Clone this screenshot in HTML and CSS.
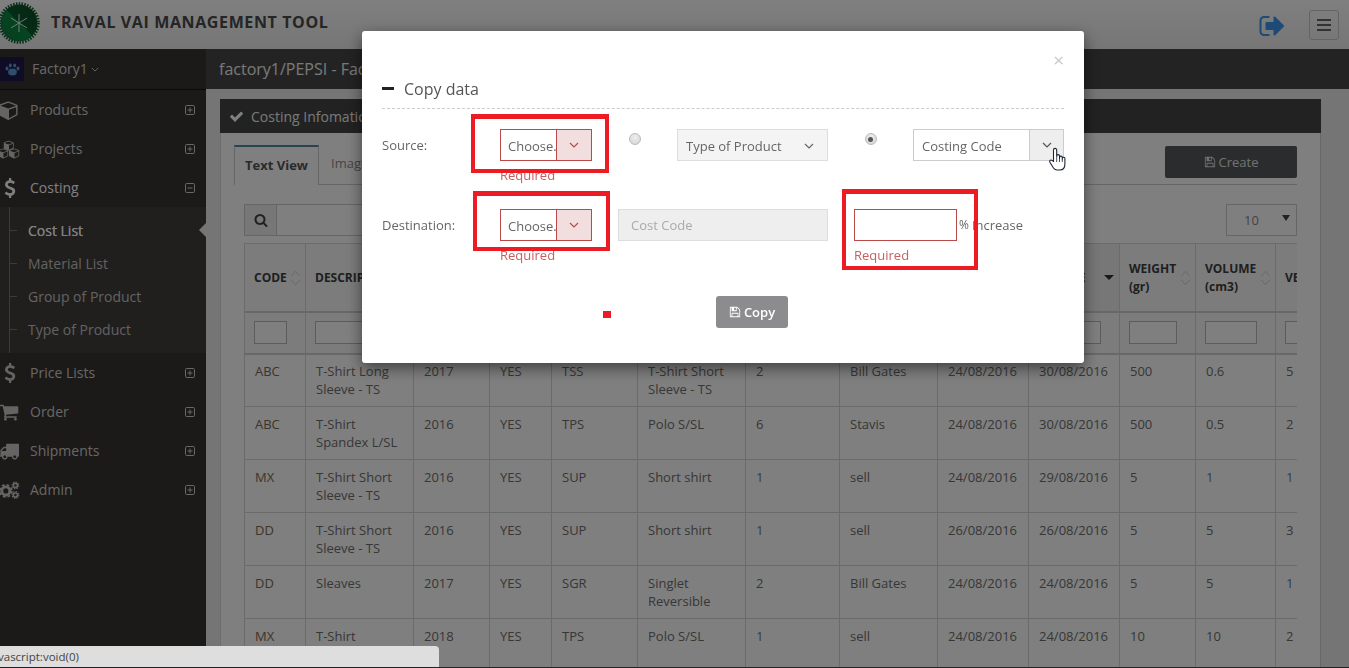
FILE: index.html
```html
<!DOCTYPE html>
<html lang="en">
<head>
<meta charset="utf-8">
<title>Traval Vai Management Tool</title>
<link rel="stylesheet" href="styles.css">
</head>
<body>
<svg class="defs" aria-hidden="true">
  <symbol id="i-check" viewBox="0 0 1792 1792"><path d="M1671 566q0 40-28 68l-724 724-136 136q-28 28-68 28t-68-28l-136-136-362-362q-28-28-28-68t28-68l136-136q28-28 68-28t68 28l294 295 656-657q28-28 68-28t68 28l136 136q28 28 28 68z"/></symbol>
  <symbol id="i-search" viewBox="0 0 1792 1792"><path d="M1216 832q0-185-131.5-316.5t-316.5-131.5-316.5 131.5-131.5 316.5 131.5 316.5 316.5 131.5 316.5-131.5 131.5-316.5zm512 832q0 52-38 90t-90 38q-54 0-90-38l-343-342q-179 124-399 124-143 0-273.5-55.5t-225-150-150-225-55.5-273.5 55.5-273.5 150-225 225-150 273.5-55.5 273.5 55.5 225 150 150 225 55.5 273.5q0 220-124 399l343 343q37 37 37 90z"/></symbol>
  <symbol id="i-save" viewBox="0 0 1792 1792"><path d="M512 1536h768v-384h-768v384zm896 0h128v-896q0-14-10-38.5t-20-34.5l-281-281q-10-10-34-20t-39-10v416q0 40-28 68t-68 28h-576q-40 0-68-28t-28-68v-416h-128v1280h128v-416q0-40 28-68t68-28h832q40 0 68 28t28 68v416zm-384-928v-320q0-13-9.5-22.5t-22.5-9.5h-192q-13 0-22.5 9.5t-9.5 22.5v320q0 13 9.5 22.5t22.5 9.5h192q13 0 22.5-9.5t9.5-22.5zm640 32v928q0 40-28 68t-68 28h-1344q-40 0-68-28t-28-68v-1344q0-40 28-68t68-28h928q40 0 88 20t76 48l280 280q28 28 48 76t20 88z"/></symbol>
  <symbol id="i-usd" viewBox="0 0 1792 1792"><path d="M1362 1185q0 153-99.5 263.5t-258.5 136.5v175q0 14-9 23t-23 9h-135q-13 0-22.5-9.5t-9.5-22.5v-175q-66-9-127.5-31t-101.5-44.5-74-48-46.5-37.5-17.5-18q-17-21-2-41l103-135q7-10 23-12 15-2 24 9l2 2q113 99 243 125 37 8 74 8 81 0 142.5-43t61.5-122q0-28-15-53t-33.5-42-58.5-37.5-66-32-80-32.5q-39-16-61.5-25t-61.5-26.5-62.5-31-56.5-35.5-53.5-42.5-43.5-49-35.5-58-21-66.5-8.5-78q0-138 98-242t255-134v-180q0-13 9.5-22.5t22.5-9.5h135q14 0 23 9t9 23v176q57 6 110.5 23t87 33.5 63.5 37.5 39 29 15 14q17 18 5 38l-81 146q-8 15-23 16-14 3-27-7-3-3-14.5-12t-39-26.5-58.5-32-74.5-26-85.5-11.5q-95 0-155 43t-60 111q0 26 8.5 48t29.5 41.5 39.5 33 56 31 60.5 27 70 27.5q53 20 81 31.5t76 35 75.5 42.5 62 50 53 63.5 31.5 76.5 13 94z"/></symbol>
  <symbol id="i-cart" viewBox="0 0 1792 1792"><path d="M704 1536q0 52-38 90t-90 38-90-38-38-90 38-90 90-38 90 38 38 90zm896 0q0 52-38 90t-90 38-90-38-38-90 38-90 90-38 90 38 38 90zm128-1088v512q0 24-16.5 42.5t-40.5 21.5l-1044 122q13 60 13 70 0 16-24 64h920q26 0 45 19t19 45-19 45-45 19h-1024q-26 0-45-19t-19-45q0-11 8-31.5t16-36 21.5-40 15.5-29.5l-177-823h-204q-26 0-45-19t-19-45 19-45 45-19h256q16 0 28.5 6.5t19.5 15.5 13 24.5 8 26 5.5 29.5 4.5 26h1201q26 0 45 19t19 45z"/></symbol>
  <symbol id="i-truck" viewBox="0 0 1792 1792"><path d="M640 1408q0-52-38-90t-90-38-90 38-38 90 38 90 90 38 90-38 38-90zm-384-512h384v-256h-158q-13 0-22 9l-195 195q-9 9-9 22v30zm1280 512q0-52-38-90t-90-38-90 38-38 90 38 90 90 38 90-38 38-90zm256-1088v1024q0 15-4 26.5t-13.5 18.5-16.5 11.5-23.5 6-22.5 2-25.5 0-22.5-.5q0 106-75 181t-181 75-181-75-75-181h-384q0 106-75 181t-181 75-181-75-75-181h-64q-3 0-22.5.5t-25.5 0-22.5-2-23.5-6-16.5-11.5-13.5-18.5-4-26.5q0-26 19-45t45-19v-320q0-8-.5-35t0-38 2.5-34.5 6.5-37 14-30.5 22.5-30l198-198q19-19 50.5-32t58.5-13h160v-192q0-26 19-45t45-19h1024q26 0 45 19t19 45z"/></symbol>
  <symbol id="i-cube" viewBox="0 0 1792 1792"><path d="M896 1629l640-349v-636l-640 233v752zm-64-865l698-254-698-254-698 254zm832-252v768q0 35-18 65t-49 47l-704 384q-28 16-61 16t-61-16l-704-384q-31-17-49-47t-18-65v-768q0-40 23-73t61-47l704-256q22-8 44-8t44 8l704 256q38 14 61 47t23 73z"/></symbol>
  <symbol id="i-cubes" viewBox="0 0 24 20"><use href="#i-cube" x="6" y="0" width="12" height="12"/><use href="#i-cube" x="0" y="8.5" width="12" height="12"/><use href="#i-cube" x="12" y="8.5" width="12" height="12"/></symbol>
  <symbol id="i-cogs" viewBox="0 0 24 20"><circle cx="8.5" cy="11" r="4.4" fill="none" stroke="currentColor" stroke-width="3.2"/><circle cx="8.5" cy="11" r="6.6" fill="none" stroke="currentColor" stroke-width="2" stroke-dasharray="3 2.2"/><circle cx="19" cy="5" r="2.2" fill="none" stroke="currentColor" stroke-width="1.8"/><circle cx="19" cy="5" r="3.6" fill="none" stroke="currentColor" stroke-width="1.4" stroke-dasharray="1.6 1.2"/><circle cx="19" cy="15.5" r="2.2" fill="none" stroke="currentColor" stroke-width="1.8"/><circle cx="19" cy="15.5" r="3.6" fill="none" stroke="currentColor" stroke-width="1.4" stroke-dasharray="1.6 1.2"/></symbol>
  <symbol id="i-plus" viewBox="0 0 10 10"><rect x=".5" y=".5" width="9" height="9" rx="1.2" fill="none" stroke="currentColor"/><path d="M2.5 5h5M5 2.5v5" stroke="currentColor" fill="none"/></symbol>
  <symbol id="i-minus" viewBox="0 0 10 10"><rect x=".5" y=".5" width="9" height="9" rx="1.2" fill="none" stroke="currentColor"/><path d="M2.5 5h5" stroke="currentColor" fill="none"/></symbol>
  <symbol id="i-chev" viewBox="0 0 10 6"><path d="M1 1l4 4 4-4" fill="none" stroke="currentColor" stroke-width="1.2"/></symbol>
  <symbol id="i-sort" viewBox="0 0 12 18"><path d="M1 7l5-5.5 5 5.5M1 11l5 5.5 5-5.5" fill="none" stroke="currentColor" stroke-width=".8"/></symbol>
</svg>

<div class="app">
  <header class="topbar">
    <svg class="logo" viewBox="0 0 42 42">
      <defs><linearGradient id="lg" x1="0" y1="1" x2="1" y2="0"><stop offset="0" stop-color="#0f7a3c"/><stop offset=".5" stop-color="#0c8a44"/><stop offset=".5" stop-color="#0a5a2c"/><stop offset="1" stop-color="#0a4a24"/></linearGradient></defs>
      <circle cx="21" cy="21" r="18.5" fill="url(#lg)"/>
      <circle cx="21" cy="21" r="19.2" fill="none" stroke="#0a5f30" stroke-width="3.2" stroke-dasharray="1.5 1.3"/>
      <path d="M21 12v18M13 16l16 10M13 26l16-10" stroke="#fff" stroke-width=".9" fill="none"/>
    </svg>
    <h1 class="brand">TRAVAL VAI MANAGEMENT TOOL</h1>
    <svg class="logout" viewBox="64 128 1600 1536"><path d="M704 1440q0 4 1 20t.5 26.5-3 23.5-10 19.5-20.5 6.5h-320q-119 0-203.5-84.5t-84.5-203.5v-704q0-119 84.5-203.5t203.5-84.5h320q13 0 22.5 9.5t9.5 22.5q0 4 1 20t.5 26.5-3 23.5-10 19.5-20.5 6.5h-320q-66 0-113 47t-47 113v704q0 66 47 113t113 47h312l11.5 1 11.5 3 8 5.5 7 9 2 13.5zm928-544q0 26-19 45l-544 544q-19 19-45 19t-45-19-19-45v-288h-448q-26 0-45-19t-19-45v-384q0-26 19-45t45-19h448v-288q0-26 19-45t45-19 45 19l544 544q19 19 19 45z"/></svg>
    <button class="burger" type="button" aria-label="Menu"><span></span><span></span><span></span></button>
  </header>

  <div class="shell">
    <nav class="sidebar">
      <div class="factory">
        <svg class="avatar" viewBox="0 0 24 24"><rect width="24" height="24" fill="#1c1a4a"/><g fill="#5f9ad8"><ellipse cx="12.5" cy="15" rx="4.4" ry="3.6"/><ellipse cx="7" cy="11.500" rx="1.500" ry="2"/><ellipse cx="10.300" cy="8.500" rx="1.500" ry="2.100"/><ellipse cx="14.700" cy="8.500" rx="1.500" ry="2.100"/><ellipse cx="18" cy="11.500" rx="1.500" ry="2"/></g></svg>
        <span class="factory-name">Factory1</span>
        <svg class="factory-chev"><use href="#i-chev"/></svg>
      </div>
      <a class="nav-item" href="#"><span class="nav-icon"><svg class="ico-cube"><use href="#i-cube"/></svg></span><span class="nav-label">Products</span><svg class="nav-toggle"><use href="#i-plus"/></svg></a>
      <a class="nav-item" href="#"><span class="nav-icon"><svg class="ico-wide"><use href="#i-cubes"/></svg></span><span class="nav-label">Projects</span><svg class="nav-toggle"><use href="#i-plus"/></svg></a>
      <a class="nav-item nav-open" href="#"><span class="nav-icon"><svg class="ico-usd"><use href="#i-usd"/></svg></span><span class="nav-label">Costing</span><svg class="nav-toggle"><use href="#i-minus"/></svg></a>
      <ul class="subnav">
        <li class="sub-active">Cost List</li>
        <li>Material List</li>
        <li>Group of Product</li>
        <li>Type of Product</li>
      </ul>
      <a class="nav-item" href="#"><span class="nav-icon"><svg class="ico-usd"><use href="#i-usd"/></svg></span><span class="nav-label">Price Lists</span><svg class="nav-toggle"><use href="#i-plus"/></svg></a>
      <a class="nav-item" href="#"><span class="nav-icon"><svg class="ico-cube"><use href="#i-cart"/></svg></span><span class="nav-label">Order</span><svg class="nav-toggle"><use href="#i-plus"/></svg></a>
      <a class="nav-item" href="#"><span class="nav-icon"><svg class="ico-cube"><use href="#i-truck"/></svg></span><span class="nav-label">Shipments</span><svg class="nav-toggle"><use href="#i-plus"/></svg></a>
      <a class="nav-item" href="#"><span class="nav-icon"><svg class="ico-wide"><use href="#i-cogs"/></svg></span><span class="nav-label">Admin</span><svg class="nav-toggle"><use href="#i-plus"/></svg></a>
    </nav>

    <main class="main">
      <div class="crumb">factory1/PEPSI - Factory 1</div>
      <div class="content">
        <section class="panel">
          <div class="panel-head"><svg class="panel-check"><use href="#i-check"/></svg>Costing Infomation</div>
          <div class="panel-body">
            <div class="tabrow">
              <div class="tab tab-active">Text View</div>
              <div class="tab">Image View</div>
              <div class="tab-fill"><button class="btn-create" type="button"><svg class="btn-ico"><use href="#i-save"/></svg>Create</button></div>
            </div>
            <div class="tools">
              <span class="search-addon"><svg class="search-ico"><use href="#i-search"/></svg></span>
              <span class="search-input"></span>
              <span class="page-size">10<i class="page-caret"></i></span>
            </div>
            <div class="table-wrap">
              <table class="grid">
                <colgroup>
                  <col class="c1"><col class="c2"><col class="c3"><col class="c4"><col class="c5"><col class="c6"><col class="c7"><col class="c8"><col class="c9"><col class="c10"><col class="c11"><col class="c12"><col class="c13">
                </colgroup>
                <thead>
                  <tr class="head-row">
                    <th><div class="th-in"><span>CODE</span><svg class="sort"><use href="#i-sort"/></svg></div></th>
                    <th><div class="th-in"><span>DESCRIPTION</span></div></th>
                    <th><div class="th-in"><span>YEAR</span></div></th>
                    <th><div class="th-in"><span>ACTIVE</span></div></th>
                    <th><div class="th-in"><span>TYPE</span></div></th>
                    <th><div class="th-in"><span>TYPE NAME</span></div></th>
                    <th><div class="th-in"><span>VERSION</span></div></th>
                    <th><div class="th-in"><span>USER</span></div></th>
                    <th><div class="th-in"><span>CREATED</span></div></th>
                    <th class="th-sorted"><div class="th-in"><span>UPDATE</span><i class="sort-down"></i></div></th>
                    <th><div class="th-in"><span>WEIGHT<br>(gr)</span><svg class="sort"><use href="#i-sort"/></svg></div></th>
                    <th><div class="th-in"><span>VOLUME<br>(cm3)</span><svg class="sort"><use href="#i-sort"/></svg></div></th>
                    <th><div class="th-in"><span>VE</span></div></th>
                  </tr>
                  <tr class="filter-row">
                    <td><span class="filter"></span></td><td><span class="filter"></span></td><td><span class="filter"></span></td><td><span class="filter"></span></td><td><span class="filter"></span></td><td><span class="filter"></span></td><td><span class="filter"></span></td><td><span class="filter"></span></td><td><span class="filter"></span></td><td><span class="filter"></span></td><td><span class="filter"></span></td><td><span class="filter"></span></td><td><span class="filter"></span></td>
                  </tr>
                </thead>
                <tbody>
                  <tr><td class="code">ABC</td><td>T-Shirt Long Sleeve - TS</td><td>2017</td><td>YES</td><td>TSS</td><td>T-Shirt Short Sleeve - TS</td><td>2</td><td>Bill Gates</td><td>24/08/2016</td><td>30/08/2016</td><td>500</td><td>0.6</td><td>5</td></tr>
                  <tr><td class="code">ABC</td><td>T-Shirt Spandex L/SL</td><td>2016</td><td>YES</td><td>TPS</td><td>Polo S/SL</td><td>6</td><td>Stavis</td><td>24/08/2016</td><td>30/08/2016</td><td>500</td><td>0.5</td><td>2</td></tr>
                  <tr><td class="code">MX</td><td>T-Shirt Short Sleeve - TS</td><td>2016</td><td>YES</td><td>SUP</td><td>Short shirt</td><td class="lnk">1</td><td>sell</td><td>24/08/2016</td><td>29/08/2016</td><td>5</td><td class="lnk">1</td><td class="lnk">1</td></tr>
                  <tr><td class="code">DD</td><td>T-Shirt Short Sleeve - TS</td><td>2016</td><td>YES</td><td>SUP</td><td>Short shirt</td><td class="lnk">1</td><td>sell</td><td>26/08/2016</td><td>26/08/2016</td><td>5</td><td>5</td><td>3</td></tr>
                  <tr><td class="code">DD</td><td>Sleaves</td><td>2017</td><td>YES</td><td>SGR</td><td>Singlet Reversible</td><td>2</td><td>Bill Gates</td><td>24/08/2016</td><td>24/08/2016</td><td>5</td><td>5</td><td class="lnk">1</td></tr>
                  <tr><td class="code">MX</td><td>T-Shirt</td><td>2018</td><td>YES</td><td>TPS</td><td>Polo S/SL</td><td class="lnk">1</td><td>sell</td><td>24/08/2016</td><td>24/08/2016</td><td>10</td><td>10</td><td>2</td></tr>
                </tbody>
              </table>
            </div>
          </div>
        </section>
      </div>
    </main>
  </div>
</div>

<div class="backdrop"></div>

<div class="modal" role="dialog">
  <div class="modal-close">×</div>
  <h2 class="modal-title"><i class="title-dash"></i>Copy data</h2>
  <div class="form-row">
    <label class="form-label">Source:</label>
    <div class="field-choose">
      <div class="combo combo-err"><span class="combo-text">Choose...</span><span class="combo-btn"><svg class="chev"><use href="#i-chev"/></svg></span></div>
      <div class="err">Required</div>
    </div>
    <div class="radio-cell"><i class="radio"></i></div>
    <div class="select-plain"><span>Type of Product</span><svg class="chev"><use href="#i-chev"/></svg></div>
    <div class="radio-cell"><i class="radio radio-on"></i></div>
    <div class="combo combo-code"><span class="combo-text">Costing Code</span><span class="combo-btn"><svg class="chev"><use href="#i-chev"/></svg></span></div>
  </div>
  <div class="form-row">
    <label class="form-label">Destination:</label>
    <div class="field-choose">
      <div class="combo combo-err"><span class="combo-text">Choose...</span><span class="combo-btn"><svg class="chev"><use href="#i-chev"/></svg></span></div>
      <div class="err">Required</div>
    </div>
    <div class="input-disabled">Cost Code</div>
    <div class="field-pct">
      <div class="input-err"></div>
      <div class="err">Required</div>
    </div>
    <span class="pct">%</span>
    <span class="increase">Increase</span>
  </div>
  <div class="modal-actions"><button class="btn-copy" type="button"><svg class="btn-ico"><use href="#i-save"/></svg>Copy</button></div>

  <div class="mark mark-a"></div>
  <div class="mark mark-b"></div>
  <div class="mark mark-c"></div>
  <div class="mark-dot"></div>
  <svg class="hand" viewBox="0 0 18 24"><path d="M4.5 13.5V3a1.6 1.6 0 0 1 3.2 0v6.5V9a1.4 1.4 0 0 1 2.8 0v2.5V10.500a1.400 1.400 0 0 1 2.800 0v1.500V11.500a1.300 1.300 0 0 1 2.600 0V17q0 6-5 6H8q-2 0-3.500-2L1 15.500q-1-2 1-2.500 1 0 2.500 1.500z" fill="#fff" stroke="#1d2333" stroke-width="1.100" stroke-linejoin="round"/><path d="M7.700 10v5M10.500 11v4M13.300 12v3" stroke="#1d2333" stroke-width=".8" fill="none"/></svg>
</div>

<div class="statusbar">vascript:void(0)</div>
<div class="bottom-line"></div>
</body>
</html>
```
FILE: styles.css
```css
* { box-sizing: border-box; }
html, body { margin: 0; height: 100%; overflow: hidden; }
body { font-family: "Open Sans", "Liberation Sans", sans-serif; font-size: 13px; color: #6a6a6a; background: #ebebeb; }
.defs { position: absolute; width: 0; height: 0; }
a { text-decoration: none; color: inherit; }

.app { height: 668px; display: flex; flex-direction: column; overflow: hidden; }

.topbar { flex: 0 0 49px; display: flex; align-items: center; background: linear-gradient(#ffffff, #ececec); }
.logo { width: 42px; height: 42px; margin: -4px 11px 0 -2px; flex: none; }
.brand { margin: -6px 0 0; font-size: 16px; font-weight: 700; color: #4a4a4a; letter-spacing: .62px; flex: 1; }
.logout { width: 26px; height: 24px; fill: #3c94f0; margin: 3px 24px 0 0; flex: none; }
.burger { width: 30px; height: 30px; margin: 0 10px 0 0; padding: 0; flex: none; border: 1px solid #c8c8c8; border-radius: 3px; background: transparent; display: flex; flex-direction: column; align-items: center; justify-content: center; gap: 3px; }
.burger span { display: block; width: 14px; height: 2px; background: #666; }

.shell { flex: 1; display: flex; min-height: 0; }

.sidebar { flex: 0 0 206px; background: #363432; color: #d0d0d0; }
.factory { height: 41px; display: flex; align-items: center; font-size: 14px; border-bottom: 1px solid #141414; }
.factory-name { margin-top: -2px; }
.avatar { width: 24px; height: 24px; margin-right: 8px; }
.factory-chev { width: 8px; height: 5px; margin-left: 3px; }
.nav-item { height: 39px; display: flex; align-items: center; font-size: 14px; color: #cfcfcf; padding-right: 11px; }
.nav-open { color: #fff; }
.nav-icon { flex: 0 0 30px; display: flex; align-items: center; color: #c8c8c8; }
.nav-open .nav-icon { color: #fff; }
.nav-label { flex: 1; }
.nav-toggle { width: 10px; height: 10px; color: #d0d0d0; }
.ico-cube { width: 20px; height: 20px; margin-left: -1px; fill: currentColor; }
.ico-wide { width: 22px; height: 20px; margin-left: -2px; fill: currentColor; }
.ico-usd { width: 20px; height: 20px; fill: currentColor; }

.subnav { list-style: none; margin: 0; padding: 7px 0; background: #403e3c; position: relative; }
.subnav::before { content: ""; position: absolute; left: 9px; top: 0; bottom: 0; width: 1px; background: #777; }
.subnav li { height: 33px; line-height: 33px; padding-left: 28px; font-size: 14px; color: #c4c4c4; position: relative; }
.subnav li::before { content: ""; position: absolute; left: 9px; top: 16px; width: 8px; height: 1px; background: #777; }
.subnav .sub-active { color: #fff; text-shadow: 0 0 .6px #fff; }
.sub-active::after { content: ""; position: absolute; right: 0; top: 9px; border: 7px solid transparent; border-right-color: #ebebeb; border-left-width: 0; }

.main { flex: 1; min-width: 0; display: flex; flex-direction: column; }
.crumb { flex: 0 0 40px; background: #464646; color: #f2f2f2; font-size: 16px; line-height: 40px; padding-left: 13px; }
.content { flex: 1; padding: 10px 28px 0 14px; min-height: 0; }
.panel { background: #fff; border-right: 1px solid #d0d0d0; height: 100%; display: flex; flex-direction: column; }
.panel-head { flex: 0 0 34px; background: #444; color: #f0f0f0; font-size: 14px; display: flex; align-items: center; padding-left: 9px; margin-right: -1px; }
.panel-check { width: 15px; height: 15px; fill: #fff; margin-right: 7px; }
.panel-body { flex: 1; padding: 12px 23px 0 14px; min-height: 0; border-left: 1px solid #dcdcdc; }

.tabrow { display: flex; height: 40px; }
.tab { padding: 9px 12px 0; font-size: 13px; color: #8a8a8a; height: 40px; border-bottom: 1px solid #ccc; white-space: nowrap; }
.tab-active { width: 85px; padding-left: 10px; border: 1px solid #ccc; border-top: 2px solid #4f86a8; border-bottom: 0; color: #555; font-weight: 700; margin-left: -1px; }
.tab-fill { flex: 1; display: flex; justify-content: flex-end; align-items: flex-start; border-bottom: 1px solid #ccc; }
.btn-create { width: 132px; height: 32px; margin-top: 1px; border: 0; border-radius: 2px; background: #57585b; color: #e4e4e4; font: 13px "Open Sans", sans-serif; display: flex; align-items: center; justify-content: center; }
.btn-ico { width: 12px; height: 12px; fill: currentColor; margin-right: 3px; }

.tools { display: flex; margin: 19px 0 7px 9px; height: 32px; }
.search-addon { width: 33px; border: 1px solid #ccc; background: #eee; display: flex; align-items: center; justify-content: center; }
.search-ico { width: 14px; height: 14px; fill: #444; }
.search-input { flex: 1; border: 1px solid #ccc; border-left: 0; margin-right: 230px; }
.page-size { width: 71px; border: 1px solid #ccc; text-align: center; line-height: 31px; color: #888; padding-right: 20px; position: relative; }
.page-caret { position: absolute; right: 6px; top: 10px; border: 4px solid transparent; border-top: 6px solid #444; border-bottom: 0; }

.table-wrap { margin-left: 9px; overflow: hidden; }
.grid { border-collapse: collapse; table-layout: fixed; width: 1091px; border-top: 1px solid #ccc; }
.c1 { width: 61px; } .c2 { width: 108px; } .c3 { width: 76px; } .c4 { width: 62px; } .c5 { width: 86px; }
.c6 { width: 108px; } .c7 { width: 94px; } .c8 { width: 98px; } .c9 { width: 91px; } .c10 { width: 91px; }
.c11 { width: 76px; } .c12 { width: 80px; } .c13 { width: 70px; }
.grid th, .grid td { border: 1px solid #d6d6d6; padding: 0; }
.head-row { height: 68px; background: #f8f8f8; }
.head-row th { border-bottom: 2px solid #d0d0d0; text-align: left; font-size: 12px; font-weight: 700; color: #3e3e3e; line-height: 18px; }
.th-in { display: flex; align-items: center; padding: 1px 4px 0 9px; justify-content: space-between; height: 100%; white-space: nowrap; overflow: hidden; }
.th-sorted { background: #efefef; }
.sort { width: 11px; height: 16px; color: #c4c4c4; flex: none; margin-top: 1px; }
.sort-down { flex: none; margin-right: 1px; border: 5px solid transparent; border-top: 5px solid #333; border-bottom: 0; }
.filter-row { height: 42px; background: #f8f8f8; }
.filter-row td { border-bottom: 2px solid #d0d0d0; padding: 0 18px 0 9px; }
.filter { display: block; height: 23px; background: #fff; border: 1px solid #b8b8b8; }
.grid tbody tr { height: 53px; }
.grid tbody td { vertical-align: top; padding: 8px 10px 0 10px; line-height: 18px; font-size: 13px; color: #6e6e6e; background: #fff; }
.grid tbody tr:first-child td { padding-top: 7px; }
.grid tbody td.code { color: #7c6a55; }
.grid tbody td.lnk { color: #5a7f9a; }

.backdrop { position: fixed; inset: 0; background: rgba(0, 0, 0, .5); }

.modal { position: fixed; left: 362px; top: 31px; width: 722px; height: 332px; background: #fff; border-radius: 3px; box-shadow: 0 5px 15px rgba(0, 0, 0, .5); padding: 0 20px; }
.modal-close { position: absolute; right: 20px; top: 18px; font-size: 19px; line-height: 22px; color: #c8c8c8; }
.modal-title { margin: 0; padding-top: 46px; height: 78px; font-size: 16px; font-weight: 400; color: #555; line-height: 24px; border-bottom: 1px dashed #ccc; display: flex; align-items: flex-start; }
.title-dash { width: 12px; height: 3px; background: #222; margin: 10px 10px 0 0; }

.form-row { display: flex; align-items: flex-start; height: 80px; font-size: 13px; color: #666; }
.modal-title + .form-row { margin-top: 20px; }
.form-label { flex: 0 0 118px; line-height: 32px; }
.field-choose { flex: 0 0 92px; min-width: 0; }
.combo { display: flex; height: 32px; border: 1px solid #ccc; background: #fff; }
.combo-text { flex: 1; min-width: 0; overflow: hidden; white-space: nowrap; padding-left: 7px; line-height: 32px; color: #666; }
.combo-btn { flex: none; display: flex; align-items: center; justify-content: center; background: #eee; border-left: 1px solid #ccc; }
.combo-err { border-color: #b94a48; }
.combo-err .combo-btn { width: 35px; background: #f2dede; border-left-color: #b94a48; color: #b94a48; }
.combo-code { flex: 0 0 151px; }
.combo-code .combo-text { padding-left: 8px; }
.combo-code .combo-btn { width: 34px; color: #555; }
.chev { width: 10px; height: 6px; }
.err { color: #c9605e; line-height: 18px; margin-top: 5px; }
.radio-cell { flex: 0 0 85px; display: flex; justify-content: center; padding-top: 4px; }
.radio { width: 12px; height: 12px; border-radius: 50%; border: 1px solid #bbb; background: radial-gradient(circle at 50% 35%, #eee, #d2d2d2); display: flex; align-items: center; justify-content: center; }
.radio-on::after { content: ""; width: 5px; height: 5px; border-radius: 50%; background: #555; }
.select-plain { flex: 0 0 151px; height: 32px; border: 1px solid #ddd; background: #f4f4f4; display: flex; align-items: center; justify-content: space-between; padding: 1px 13px 0 8px; color: #666; }
.input-disabled { flex: 0 0 210px; height: 32px; margin-left: 26px; border: 1px solid #ddd; background: #eee; color: #aaa; line-height: 31px; padding-left: 12px; }
.field-pct { flex: 0 0 103px; margin-left: 26px; }
.input-err { height: 32px; border: 1px solid #b94a48; background: #fff; }
.pct { line-height: 32px; margin-left: 2px; font-size: 12px; }
.increase { line-height: 32px; margin-left: 3px; }
.modal-actions { display: flex; padding-left: 334px; margin-top: 7px; }
.btn-copy { width: 72px; height: 32px; border: 0; border-radius: 3px; background: #8c8c8e; color: #fff; font: 600 13px "Open Sans", sans-serif; display: flex; align-items: center; justify-content: center; padding: 0; }

.mark { position: absolute; border-style: solid; border-color: #ed1c24; border-width: 5px 4px 4px; }
.mark-a { left: 109px; top: 83px; width: 138px; height: 59px; }
.mark-b { left: 111px; top: 160px; width: 137px; height: 60px; }
.mark-c { left: 480px; top: 158px; width: 136px; height: 81px; }
.mark-dot { position: absolute; left: 241px; top: 280px; width: 8px; height: 7px; background: #ed1c24; }
.hand { position: absolute; left: 687px; top: 116px; width: 18px; height: 24px; }

.statusbar { position: fixed; left: 0; bottom: 0; width: 439px; height: 22px; background: #dedede; border-radius: 0 4px 0 0; overflow: hidden; line-height: 22px; font-size: 11.5px; color: #444; white-space: nowrap; text-indent: -2px; }
.bottom-line { position: fixed; left: 0; right: 0; bottom: 0; height: 1px; background: #222; }
```
